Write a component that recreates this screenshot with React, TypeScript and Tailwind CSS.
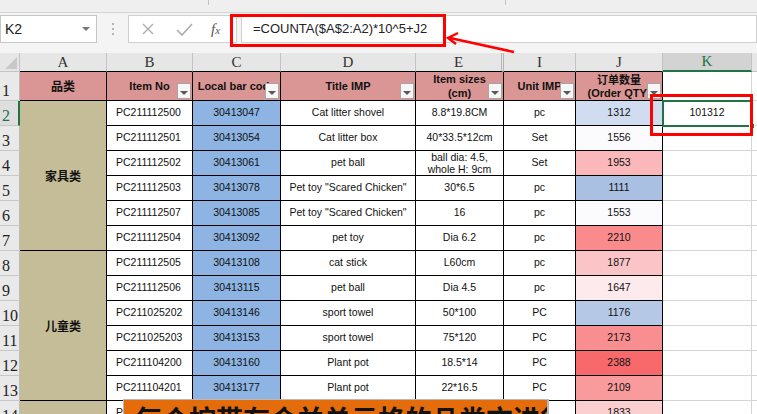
import React from "react";

type Row = {
  n: number;
  b: string;
  c: string;
  d: string;
  e: React.ReactNode;
  i: string;
  j: string;
  jBg: string;
};

const rows: Row[] = [
  { n: 2, b: "PC211112500", c: "30413047", d: "Cat litter shovel", e: "8.8*19.8CM", i: "pc", j: "1312", jBg: "bg-[#d0dcef]" },
  { n: 3, b: "PC211112501", c: "30413054", d: "Cat litter box", e: "40*33.5*12cm", i: "Set", j: "1556", jBg: "bg-[#fbfbfe]" },
  {
    n: 4,
    b: "PC211112502",
    c: "30413061",
    d: "pet ball",
    e: (
      <span className="leading-[12px]">
        ball dia: 4.5,
        <br />
        whole H: 9cm
      </span>
    ),
    i: "Set",
    j: "1953",
    jBg: "bg-[#fab8ba]",
  },
  { n: 5, b: "PC211112503", c: "30413078", d: 'Pet toy "Scared Chicken"', e: "30*6.5", i: "pc", j: "1111", jBg: "bg-[#a9c0e2]" },
  { n: 6, b: "PC211112507", c: "30413085", d: 'Pet toy "Scared Chicken"', e: "16", i: "pc", j: "1553", jBg: "bg-[#fbfbfe]" },
  { n: 7, b: "PC211112504", c: "30413092", d: "pet toy", e: "Dia 6.2", i: "pc", j: "2210", jBg: "bg-[#f98b8d]" },
  { n: 8, b: "PC211112505", c: "30413108", d: "cat stick", e: "L60cm", i: "pc", j: "1877", jBg: "bg-[#fbc5c7]" },
  { n: 9, b: "PC211112506", c: "30413115", d: "pet ball", e: "Dia 4.5", i: "pc", j: "1647", jBg: "bg-[#fdeaed]" },
  { n: 10, b: "PC211025202", c: "30413146", d: "sport towel", e: "50*100", i: "PC", j: "1176", jBg: "bg-[#b5c9e6]" },
  { n: 11, b: "PC211025203", c: "30413153", d: "sport towel", e: "75*120", i: "PC", j: "2173", jBg: "bg-[#f98e90]" },
  { n: 12, b: "PC211104200", c: "30413160", d: "Plant pot", e: "18.5*14", i: "PC", j: "2388", jBg: "bg-[#f8696b]" },
  { n: 13, b: "PC211104201", c: "30413177", d: "Plant pot", e: "22*16.5", i: "PC", j: "2109", jBg: "bg-[#f99b9d]" },
  // row 14 sits mostly under the caption banner
  { n: 14, b: "P", c: "", d: "", e: "", i: "", j: "1833", jBg: "bg-[#fbced0]" },
];

function FilterBtn() {
  return (
    <span className="absolute right-[1px] bottom-[1px] w-[14px] h-[16px] bg-[#f6f6f6] border border-[#a6a6a6] flex items-center justify-center">
      <span className="mt-[3px] w-0 h-0 border-l-[4px] border-r-[4px] border-t-[4px] border-l-transparent border-r-transparent border-t-[#595959]" />
    </span>
  );
}

function Head({ children, filter = true }: { children: React.ReactNode; filter?: boolean }) {
  return (
    <div className="relative bg-[#da9694] border-r border-b border-black flex items-center justify-center overflow-hidden whitespace-nowrap text-center text-[11px] font-bold leading-[14px] text-[#111]">
      <div className="flex flex-col items-center shrink-0">{children}</div>
      {filter && <FilterBtn />}
    </div>
  );
}

function ColLetter({ children, double = false }: { children: React.ReactNode; double?: boolean }) {
  return (
    <div
      className={[
        "bg-[#e6e6e6] flex items-center justify-center text-[15px] leading-none text-[#333] font-['Liberation_Serif',serif]",
        double ? "border-r-[3px] border-double border-[#b5b5b5] border-b border-b-black" : "border-r border-b border-r-[#c3c3c3] border-b-black",
      ].join(" ")}
    >
      {children}
    </div>
  );
}

function RowHead({ n, selected = false }: { n: number; selected?: boolean }) {
  return (
    <div
      className={[
        "flex items-end pl-[2px] pb-[1px] text-[16px] leading-none font-['Liberation_Serif',serif] border-b border-[#c8c8c8] overflow-hidden",
        selected ? "bg-[#dedede] text-[#217346] border-r-2 border-r-[#217346]" : "bg-[#e9e9e9] text-[#222] border-r border-r-[#bdbdbd]",
      ].join(" ")}
    >
      {n}
    </div>
  );
}

function Cell({ children, bg = "bg-white" }: { children?: React.ReactNode; bg?: string }) {
  return (
    <div className={`${bg} border-r border-b border-black flex items-center justify-center text-center whitespace-nowrap overflow-hidden text-[10.5px] text-[#111]`}>
      {children}
    </div>
  );
}

function Category({ label }: { label?: string }) {
  return (
    <div className="row-span-6 bg-[#c4bd97] border-r border-b border-black flex items-center justify-center text-[12px] font-bold text-[#111] font-['Noto_Sans_CJK_SC',sans-serif]">
      {label}
    </div>
  );
}

export default function App() {
  return (
    <div className="relative w-[757px] h-[414px] overflow-hidden bg-white font-['Liberation_Sans','Noto_Sans_CJK_SC',Arial,sans-serif]">
      {/* ribbon bottom strip */}
      <div className="h-[13px] bg-[#efefef] border-b border-[#d4d4d4] flex items-start">
        <div className="ml-[208px] w-px h-[5px] bg-[#c2c2c2]" />
        <div className="ml-[296px] w-px h-[5px] bg-[#c2c2c2]" />
      </div>

      {/* formula bar */}
      <div className="h-[40px] bg-[#f4f4f4] flex items-start pt-[2px]">
        <div className="w-[97px] h-[28px] bg-white border border-[#c6c6c6] flex items-center justify-between pl-[4px] pr-[6px]">
          <span className="text-[14px] text-[#222]">K2</span>
          <span className="w-0 h-0 border-l-[4px] border-r-[4px] border-t-[4px] border-l-transparent border-r-transparent border-t-[#777]" />
        </div>
        <div className="w-[31px] h-[28px] flex flex-col items-center justify-center gap-[3px]">
          <span className="w-[2px] h-[2px] bg-[#b4b4b4]" />
          <span className="w-[2px] h-[2px] bg-[#b4b4b4]" />
          <span className="w-[2px] h-[2px] bg-[#b4b4b4]" />
        </div>
        <div className="w-[109px] h-[28px] bg-white border border-[#d0d0d0] flex items-center pl-[13px]">
          <svg width="12" height="12" viewBox="0 0 12 12">
            <path d="M1 1 L11 11 M11 1 L1 11" stroke="#ababab" strokeWidth="1.3" fill="none" />
          </svg>
          <svg className="ml-[22px]" width="17" height="13" viewBox="0 0 17 13">
            <path d="M1 7 L6 12 L16 1" stroke="#ababab" strokeWidth="1.6" fill="none" />
          </svg>
          <span className="ml-[18px] italic font-['Liberation_Serif',serif] text-[15px] text-[#555] leading-none">
            f<span className="text-[11px]">x</span>
          </span>
        </div>
        <div className="ml-[4px] flex-1 h-[28px] bg-white border border-[#d0d0d0] flex items-center pl-[11px]">
          <span className="text-[13px] text-[#222]">=COUNTA($A$2:A2)*10^5+J2</span>
        </div>
      </div>

      {/* sheet grid */}
      <div className="grid grid-cols-[20px_87px_86px_88px_135px_88px_72px_87px_89px_1fr] grid-rows-[19px_29px_repeat(13,25px)]">
        {/* column letters */}
        <div className="bg-[#e6e6e6] border-r border-b border-[#c3c3c3] flex items-end justify-end pr-[2px] pb-[2px]">
          <svg width="12" height="12" viewBox="0 0 12 12">
            <path d="M12 0 L12 12 L0 12 Z" fill="#c8c8c8" />
          </svg>
        </div>
        <ColLetter>A</ColLetter>
        <ColLetter>B</ColLetter>
        <ColLetter>C</ColLetter>
        <ColLetter>D</ColLetter>
        <ColLetter double>E</ColLetter>
        <ColLetter>I</ColLetter>
        <ColLetter>J</ColLetter>
        <div className="bg-[#d3d3d3] border-r border-r-[#c3c3c3] border-b-2 border-b-[#217346] flex items-center justify-center text-[15px] leading-none text-[#217346] font-['Liberation_Serif',serif]">
          K
        </div>
        <div className="bg-[#e6e6e6] border-b border-[#c3c3c3]" />

        {/* header row 1 */}
        <RowHead n={1} />
        <Head filter={false}>
          <span className="text-[12px] font-['Noto_Sans_CJK_SC',sans-serif]">品类</span>
        </Head>
        <Head>Item No</Head>
        <Head>Local bar code</Head>
        <Head>Title IMP</Head>
        <Head>
          <span>Item sizes</span>
          <span>(cm)</span>
        </Head>
        <Head>Unit IMP</Head>
        <Head>
          <span className="font-['Noto_Sans_CJK_SC',sans-serif] text-[11px] leading-[14px]">订单数量</span>
          <span>(Order QTY)</span>
        </Head>
        <div className="bg-white border-r border-b border-[#d4d4d4]" />
        <div className="bg-white border-b border-[#d4d4d4]" />

        {/* data rows */}
        {rows.map((r) => (
          <React.Fragment key={r.n}>
            <RowHead n={r.n} selected={r.n === 2} />
            {r.n === 2 && <Category label="家具类" />}
            {r.n === 8 && <Category label="儿童类" />}
            {r.n === 14 && <Category />}
            <Cell>
              <span className="w-full text-left pl-[9px]">{r.b}</span>
            </Cell>
            <Cell bg="bg-[#8db4e2]">{r.c}</Cell>
            <Cell>{r.d}</Cell>
            <Cell>{r.e}</Cell>
            <Cell>{r.i}</Cell>
            <Cell bg={r.jBg}>{r.j}</Cell>
            {r.n === 2 ? (
              <div className="relative bg-white border-r border-b border-[#d4d4d4] flex items-center justify-center text-[10.5px] text-[#111]">
                101312
                <span className="absolute left-[-1px] top-[-1px] w-[90px] h-[27px] border-2 border-[#217346]" />
                <span className="absolute right-[-4px] bottom-[-4px] w-[6px] h-[6px] bg-[#217346] border border-white" />
              </div>
            ) : (
              <div className="bg-white border-r border-b border-[#d4d4d4]" />
            )}
            <div className="bg-white border-b border-[#d4d4d4]" />
          </React.Fragment>
        ))}
      </div>

      {/* annotation: red boxes and arrow */}
      <div className="absolute left-[230px] top-[14px] w-[216px] h-[33px] border-[3px] border-[#ff0000] pointer-events-none" />
      <div className="absolute left-[650px] top-[94px] w-[103px] h-[42px] border-[3px] border-[#ff0000] pointer-events-none" />
      <svg className="absolute left-0 top-0 pointer-events-none" width="757" height="414">
        <path d="M514 52 L450 38" stroke="#ff0000" strokeWidth="2.5" fill="none" />
        <path d="M458 33 L448 38 L456 44" stroke="#ff0000" strokeWidth="2.5" fill="none" />
      </svg>

      {/* orange caption banner */}
      <div className="absolute left-[123px] top-[399px] w-[426px] h-[30px] bg-[#e46c0a] border border-[#b8b8b8] border-r-2 overflow-hidden pl-[11px] pt-[5px] whitespace-nowrap">
        <span className="text-[27px] leading-none font-bold text-[#111] font-['Noto_Sans_CJK_SC',sans-serif]">
          每个按带有合并单元格的品类方进行编号
        </span>
      </div>
    </div>
  );
}
